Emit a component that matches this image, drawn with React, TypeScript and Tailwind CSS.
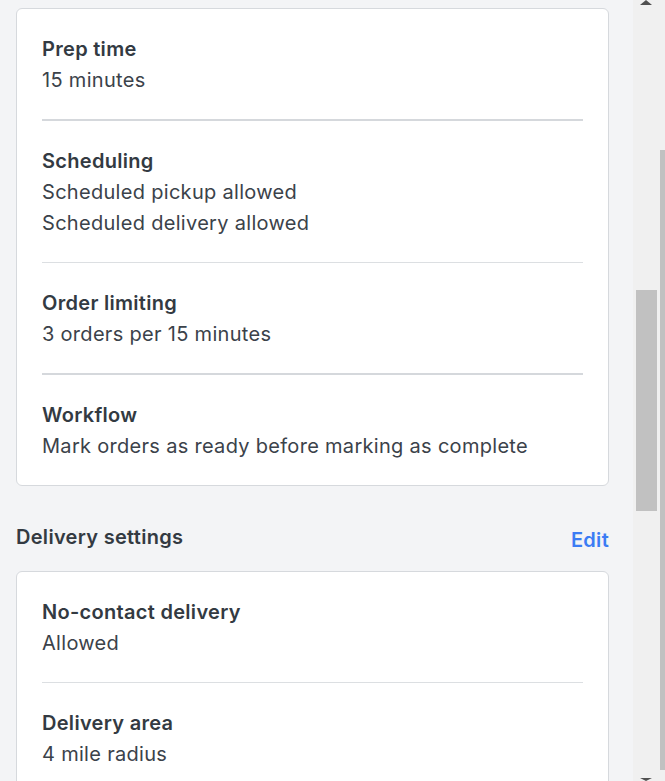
import React from "react";

type Item = { title: string; values: string[]; thick?: boolean };

const orderItems: Item[] = [
  { title: "Prep time", values: ["15 minutes"], thick: true },
  { title: "Scheduling", values: ["Scheduled pickup allowed", "Scheduled delivery allowed"] },
  { title: "Order limiting", values: ["3 orders per 15 minutes"], thick: true },
  { title: "Workflow", values: ["Mark orders as ready before marking as complete"] },
];

const deliveryItems: Item[] = [
  { title: "No-contact delivery", values: ["Allowed"] },
  { title: "Delivery area", values: ["4 mile radius"] },
];

function Card({ items }: { items: Item[] }) {
  return (
    <div className="bg-white border border-[#d6d9dd] rounded-[6px] px-[25px]">
      {items.map((it, i) => (
        <div key={it.title}>
          <div className="pt-[25px] pb-[23px]">
            <div className="text-[20px] leading-[31px] font-semibold tracking-[0.3px] text-[#333a42]">{it.title}</div>
            {it.values.map((v) => (
              <div key={v} className="text-[20px] leading-[31px] tracking-[0.3px] text-[#3b424a]">
                {v}
              </div>
            ))}
          </div>
          {i < items.length - 1 && (
            <div className={it.thick ? "h-[2px] bg-[#d5d8dc]" : "h-px bg-[#dcdfe2]"} />
          )}
        </div>
      ))}
    </div>
  );
}

export default function App() {
  return (
    <div
      className="flex h-[781px] w-[665px] overflow-hidden bg-[#f3f4f6]"
      style={{ fontFamily: "Inter, 'Open Sans', sans-serif" }}
    >
      <div className="w-[633px] shrink-0 pl-[16px] pr-[24px] pt-[8px]">
        <Card items={orderItems} />
        <div className="flex h-[30px] items-start justify-between mt-[36px] mb-[19px]">
          <div className="text-[20px] leading-[30px] font-semibold tracking-[0.3px] text-[#333a42]">Delivery settings</div>
          <div className="mt-[3px] text-[20px] leading-[30px] font-semibold tracking-[0.3px] text-[#3b7cf4]">Edit</div>
        </div>
        <Card items={deliveryItems} />
      </div>
      <div className="flex w-[32px] shrink-0 bg-[#f0f0f0]">
        <div className="flex w-[27px] flex-col items-center">
          <div className="h-0 w-0 border-l-[6px] border-r-[6px] border-b-[5px] border-l-transparent border-r-transparent border-b-[#505050] ml-[-1px]" />
          <div className="mt-[285px] h-[221px] w-[21px] bg-[#c1c1c1] ml-[-1px]" />
          <div className="mt-auto h-0 w-0 border-l-[6px] border-r-[6px] border-t-[3px] border-l-transparent border-r-transparent border-t-[#505050] ml-[-1px]" />
        </div>
        <div className="flex w-[5px] flex-col">
          <div className="mt-[150px] h-[620px] w-[5px] bg-[#c1c1c1]" />
        </div>
      </div>
    </div>
  );
}
